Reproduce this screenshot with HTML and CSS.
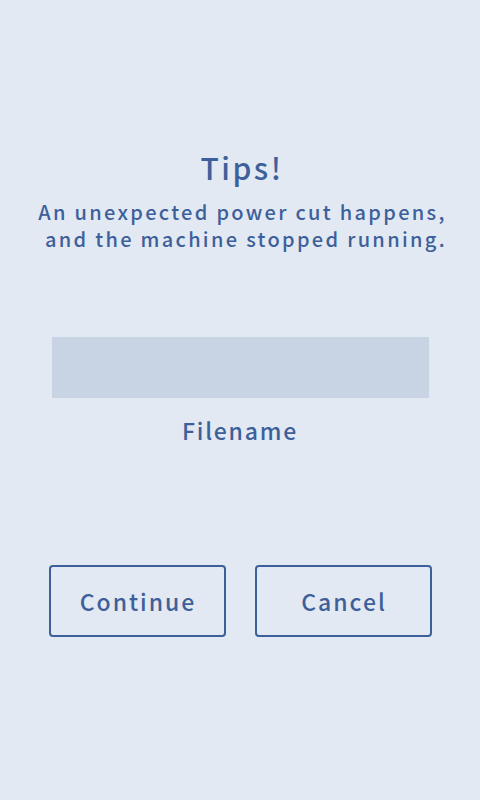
FILE: index.html
```html
<!DOCTYPE html>
<html>
<head>
<meta charset="utf-8">
<link rel="stylesheet" href="styles.css">
</head>
<body>
<div class="screen">
  <h1 class="title">Tips!</h1>
  <p class="message">An unexpected power cut happens,<br>&nbsp;and the machine stopped running.</p>
  <div class="file-box"></div>
  <div class="file-name">Filename</div>
  <div class="actions">
    <button class="btn">Continue</button>
    <button class="btn">Cancel</button>
  </div>
</div>
</body>
</html>
```
FILE: styles.css
```css
html, body {
  margin: 0;
  padding: 0;
  background: #e2e9f3;
}
.screen {
  width: 480px;
  height: 800px;
  display: flex;
  flex-direction: column;
  align-items: center;
  font-family: "Noto Sans CJK SC", "Noto Sans", sans-serif;
  font-weight: 500;
  color: #3d609a;
}
.title {
  margin: 145px 0 0;
  font-size: 30px;
  font-weight: 500;
  letter-spacing: 2.5px;
  line-height: 44px;
  padding-left: 4px;
}
.message {
  margin: 9px 0 0;
  padding-left: 5px;
  font-size: 20px;
  line-height: 27px;
  letter-spacing: 2.3px;
  text-align: center;
}
.file-box {
  margin-top: 85px;
  width: 377px;
  height: 61px;
  background: #c8d3e4;
}
.file-name {
  margin-top: 16px;
  font-size: 23px;
  line-height: 32px;
  letter-spacing: 1.8px;
}
.actions {
  margin-top: 119px;
  display: flex;
  gap: 29px;
}
.btn {
  width: 177px;
  height: 72px;
  border: 2px solid #3d609a;
  border-radius: 4px;
  background: transparent;
  color: #3d609a;
  font-family: inherit;
  font-weight: 500;
  font-size: 23px;
  letter-spacing: 2px;
  padding: 0 0 0 2px;
}
```
